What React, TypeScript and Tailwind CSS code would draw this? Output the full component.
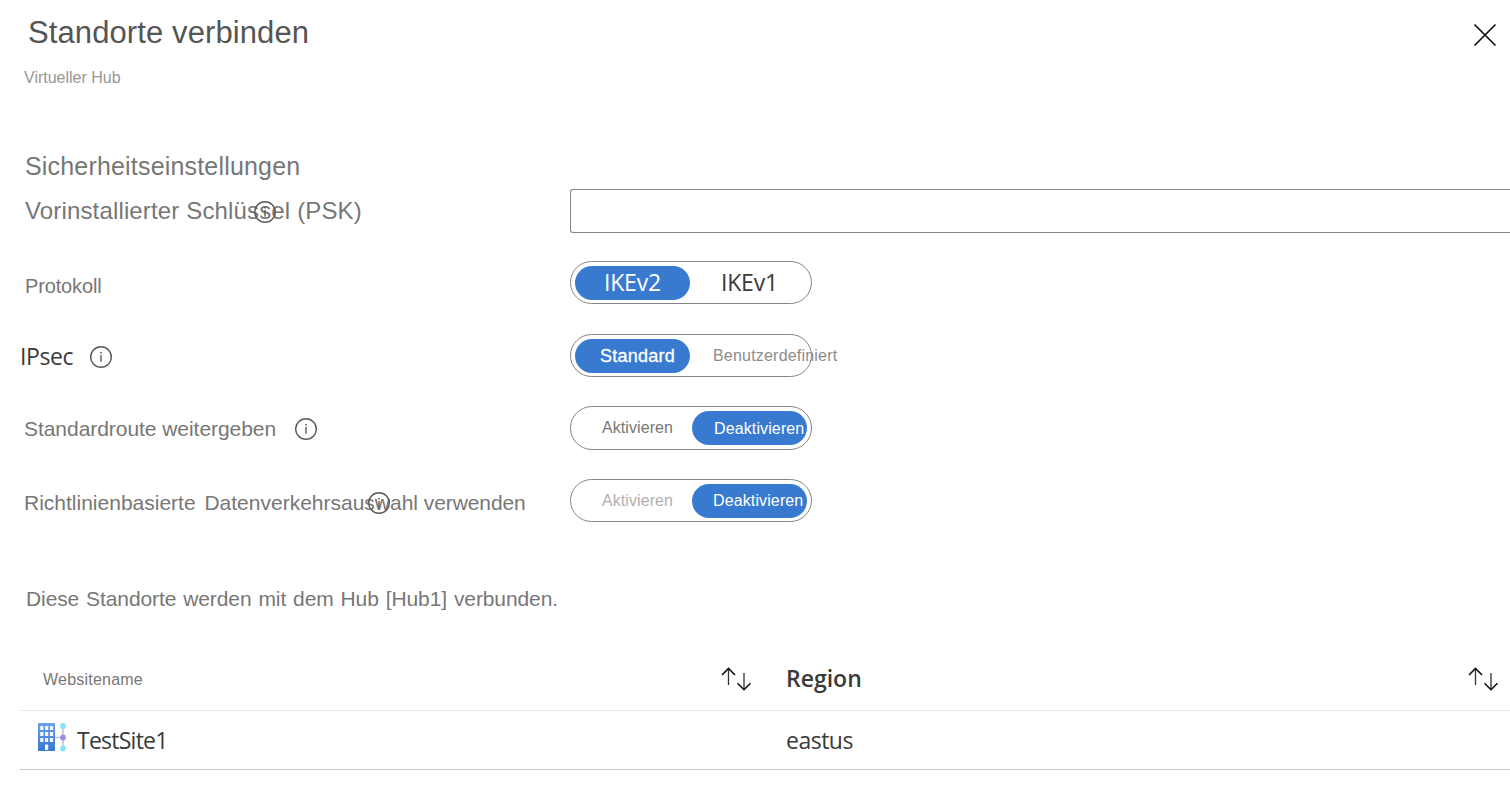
import type { ReactNode } from "react";

const arial = "font-['Liberation_Sans',Arial,sans-serif]";
const segoe = "font-['Open_Sans','Noto_Sans',sans-serif]";

function InfoIcon({ className = "" }: { className?: string }) {
  return (
    <svg className={`h-6 w-6 ${className}`} viewBox="0 0 24 24" fill="none">
      <circle cx="12" cy="12" r="10.3" stroke="#5a5a5a" strokeWidth="1.4" />
      <path d="M12 10v6.800" stroke="#5a5a5a" strokeWidth="1.4" />
      <circle cx="12" cy="7.700" r="0.9" fill="#5a5a5a" />
    </svg>
  );
}

function SortIcon() {
  return (
    <svg className="h-6 w-8" viewBox="0 0 32 24" fill="none">
      <path d="M8.500 1.500v16.500M24 6v16.500" stroke="#333" strokeWidth="1.3" />
      <path d="M2 8 8.500 1.500 15 8" stroke="#111" strokeWidth="1.6" />
      <path d="M17.500 16.200 24 22.700l6.500-6.500" stroke="#111" strokeWidth="1.6" />
    </svg>
  );
}

function SiteIcon() {
  return (
    <svg className="h-[30px] w-[30px]" viewBox="0 0 30 30" fill="none">
      <defs>
        <linearGradient id="building" x1="0" y1="0" x2="0" y2="1">
          <stop offset="0" stopColor="#6ca0ea" />
          <stop offset="1" stopColor="#3878d0" />
        </linearGradient>
      </defs>
      <path d="M17 15.500H25M25 4v22" stroke="#c6c6c6" strokeWidth="1.6" />
      <rect x="0" y="1" width="17" height="28" rx="0.7" fill="url(#building)" />
      {[4, 10, 16].map((y) =>
        [2.2, 7, 11.9].map((x) => (
          <rect key={`${x}-${y}`} x={x} y={y} width="3.2" height="4" fill="#f3f6fc" />
        )),
      )}
      <rect x="7" y="22.500" width="3.2" height="5.500" fill="#f3f6fc" />
      <circle cx="25" cy="4" r="2.900" fill="#83e3fb" />
      <circle cx="25" cy="15.500" r="2.900" fill="#a487f0" />
      <circle cx="25" cy="26.500" r="2.900" fill="#83e3fb" />
    </svg>
  );
}

function Row({ label, className, children }: { label: ReactNode; className: string; children: ReactNode }) {
  return (
    <div className={`flex ${className}`}>
      <div className="w-[570px] shrink-0">{label}</div>
      {children}
    </div>
  );
}

function Toggle({ selected, left, right }: { selected: "left" | "right"; left: ReactNode; right: ReactNode }) {
  const on = "bg-[#397ad1] text-white";
  return (
    <div className="flex h-full w-[242px] shrink-0 items-center justify-between rounded-full border border-[#848484] px-1 whitespace-nowrap">
      <div className={`flex h-[34px] w-[115px] rounded-full ${selected === "left" ? on : ""}`}>{left}</div>
      <div className={`flex h-[34px] w-[115px] rounded-full ${selected === "right" ? on : ""}`}>{right}</div>
    </div>
  );
}

export default function App() {
  return (
    <div className={`h-[800px] w-[1510px] overflow-hidden bg-white whitespace-nowrap text-[#777] ${arial}`}>
      <header className="flex h-[151px] justify-between pt-3 pr-[13px]">
        <div>
          <h1 className="pt-px pl-[28px] text-[31px] leading-10 tracking-[0.1px] text-[#555]">Standorte verbinden</h1>
          <p className="pt-[15px] pl-6 text-base leading-5 text-[#979797]">Virtueller Hub</p>
        </div>
        <svg className="mt-[11px] h-6 w-6" viewBox="0 0 24 24" fill="none">
          <path d="M1.500 1.500l21 21M22.500 1.500l-21 21" stroke="#111" strokeWidth="1.7" />
        </svg>
      </header>

      <h2 className="h-[38px] pl-[25px] text-[25px] leading-[30px] tracking-[0.18px]">Sicherheitseinstellungen</h2>

      <Row
        className="h-11"
        label={
          <div className="relative pt-[7px] pl-[25px] text-2xl leading-[30px] tracking-[0.15px]">
            Vorinstallierter Schlüssel (PSK)
            <InfoIcon className="absolute top-[11px] left-[253px]" />
          </div>
        }
      >
        <input className="h-11 grow rounded-l-[3px] border border-r-0 border-[#848484] bg-white px-3 outline-none" />
      </Row>

      <Row
        className="mt-7 h-[43px]"
        label={<div className="pt-[10px] pl-[25px] text-xl leading-[30px] tracking-[-0.15px]">Protokoll</div>}
      >
        <Toggle
          selected="left"
          left={<span className={`pl-[29px] text-[23px] leading-8 tracking-[-0.2px] ${segoe}`}>IKEv2</span>}
          right={<span className={`pl-[29px] text-[23px] leading-8 tracking-[-0.2px] text-[#3a3a3a] ${segoe}`}>IKEv1</span>}
        />
      </Row>

      <Row
        className="mt-[30px] h-[43px]"
        label={
          <div className={`flex pt-[7px] pl-5 text-[23px] leading-[30px] tracking-[-0.4px] text-[#3a3a3a] ${segoe}`}>
            <span className="w-[69px]">IPsec</span>
            <InfoIcon className="mt-1" />
          </div>
        }
      >
        <Toggle
          selected="left"
          left={<span className="pl-[25px] text-[18px] leading-[34px] tracking-[0.25px] [-webkit-text-stroke:0.3px_white]">Standard</span>}
          right={<span className="pl-[21px] text-base leading-[34px] tracking-[0.2px] text-[#8c8c8c]">Benutzerdefiniert</span>}
        />
      </Row>

      <Row
        className="mt-[29px] h-11"
        label={
          <div className="flex pt-2 pl-6 text-[21px] leading-[30px] tracking-[-0.05px]">
            <span className="w-[270px]">Standardroute weitergeben</span>
            <InfoIcon className="mt-[3px]" />
          </div>
        }
      >
        <Toggle
          selected="right"
          left={<span className="pl-[27px] text-base leading-[34px] tracking-[0.08px]">Aktivieren</span>}
          right={<span className="pl-[22px] text-base leading-9 tracking-[0.12px]">Deaktivieren</span>}
        />
      </Row>

      <Row
        className="mt-[29px] h-[43px]"
        label={
          <div className="relative pt-[9px] pl-6 text-[21px] leading-[30px]">
            <span className="[word-spacing:3px]">Richtlinienbasierte Datenverkehrsauswahl</span>
            <span className="tracking-[-0.1px]"> verwenden</span>
            <InfoIcon className="absolute top-[12px] left-[367px]" />
          </div>
        }
      >
        <Toggle
          selected="right"
          left={<span className="pl-[27px] text-base leading-[34px] tracking-[0.08px] text-[#b0b0b0]">Aktivieren</span>}
          right={<span className="pl-[21px] text-base leading-[34px] tracking-[0.12px]">Deaktivieren</span>}
        />
      </Row>

      <p className="mt-[62px] pl-[26px] text-[21px] leading-[30px] tracking-[-0.1px] [word-spacing:1.2px]">
        Diese Standorte werden mit dem Hub [Hub1] verbunden.
      </p>

      <div className="mt-9 ml-5">
        <div className="flex h-[61px] border-b border-[#e8e8e8]">
          <div className="flex w-[766px] justify-between pt-[17px] pr-[34px] pl-[23px]">
            <span className="pt-[3px] text-base leading-5 tracking-[0.22px]">Websitename</span>
            <SortIcon />
          </div>
          <div className="flex grow justify-between pt-[17px] pr-[11px]">
            <span className={`-mt-px text-[23px] leading-6 font-semibold text-[#3a3a3a] ${segoe}`}>Region</span>
            <SortIcon />
          </div>
        </div>
        <div className={`flex h-[59px] border-b border-[#c8c8c8] text-[23px] leading-[30px] text-[#3a3a3a] ${segoe}`}>
          <div className="flex w-[766px] pt-[11px] pl-[18px]">
            <SiteIcon />
            <span className="pt-[3px] pl-[9px] tracking-[-0.75px]">TestSite1</span>
          </div>
          <span className="pt-[14px] tracking-[-0.5px]">eastus</span>
        </div>
      </div>
    </div>
  );
}
